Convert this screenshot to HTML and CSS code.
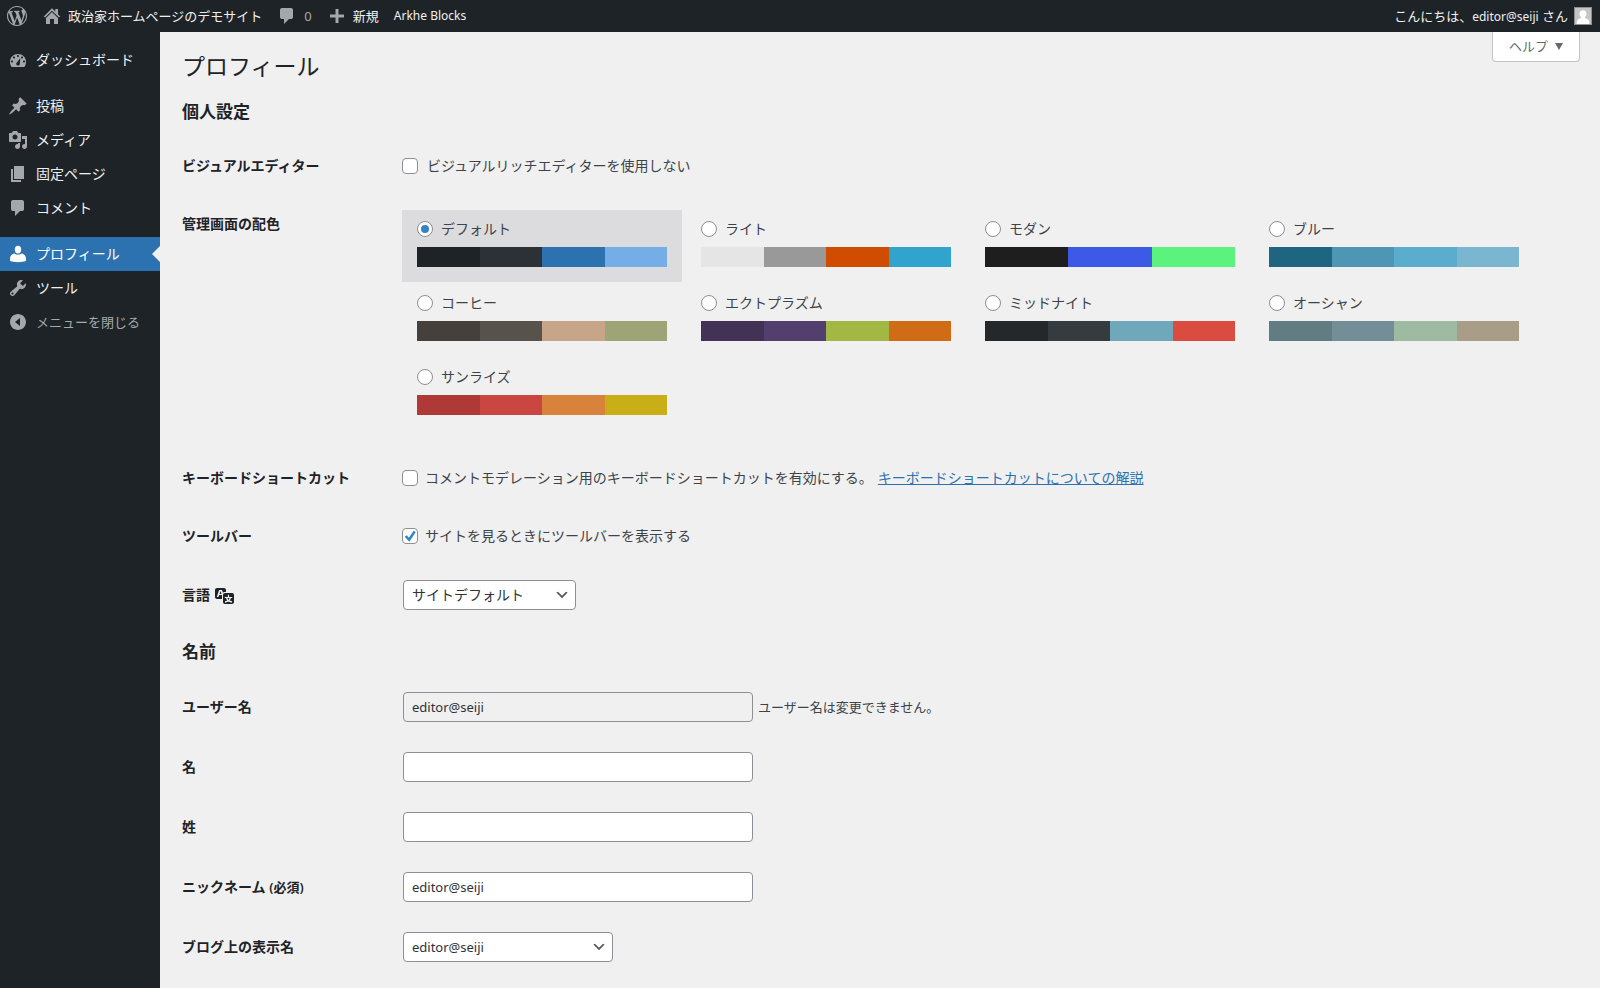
FILE: index.html
```html
<!DOCTYPE html>
<html lang="ja">
<head>
<meta charset="utf-8">
<title>プロフィール</title>
<link rel="stylesheet" href="styles.css">
</head>
<body>
<header class="adminbar">
  <nav class="adminbar-group" aria-label="ツールバー">
    <a class="bar-item bar-logo" href="#" aria-label="WordPress">
      <svg class="icon" viewBox="0 0 20 20"><path d="M20 10c0-5.51-4.49-10-10-10C4.48 0 0 4.49 0 10c0 5.52 4.48 10 10 10 5.51 0 10-4.48 10-10zM7.78 15.37L4.37 6.22c.55-.02 1.17-.08 1.17-.08.5-.06.44-1.13-.06-1.11 0 0-1.45.11-2.37.11-.18 0-.37 0-.58-.01C4.12 2.69 6.87 1.11 10 1.11c2.33 0 4.45.87 6.05 2.34-.68-.11-1.65.39-1.65 1.58 0 .74.45 1.36.9 2.1.35.61.55 1.36.55 2.46 0 1.49-1.4 5-1.4 5l-3.03-8.37c.54-.02.82-.17.82-.17.5-.05.44-1.25-.06-1.22 0 0-1.44.12-2.38.12-.87 0-2.33-.12-2.33-.12-.5-.03-.56 1.2-.06 1.22l.92.08 1.26 3.41zM17.41 10c.24-.64.74-1.87.43-4.25.7 1.29 1.05 2.71 1.05 4.25 0 3.29-1.73 6.24-4.4 7.78.97-2.59 1.94-5.2 2.92-7.78zM6.1 18.09C3.12 16.65 1.11 13.53 1.11 10c0-1.3.23-2.48.72-3.59C3.25 10.3 4.67 14.2 6.1 18.09zm4.03-6.63l2.58 6.98c-.86.29-1.76.45-2.71.45-.79 0-1.57-.11-2.29-.33.81-2.38 1.62-4.74 2.42-7.1z"/></svg>
    </a>
    <a class="bar-item" href="#">
      <svg class="icon" viewBox="0 0 20 20"><path d="M16 8.200l2.200 2.200-1.200 1.200L10 4.800l-7 6.800-1.200-1.200L10 2.200l3.300 3.300V3H16zm-6-2.100l6 5.900V18h-4v-5H8v5H4v-6z"/></svg>
      <span>政治家ホームページのデモサイト</span>
    </a>
    <a class="bar-item" href="#">
      <svg class="icon" viewBox="0 0 20 20"><path d="M5 2h9q.82 0 1.410.590T16 4v7q0 .820-.590 1.410T14 13h-2l-5 5v-5H5q-.820 0-1.410-.590T3 11V4q0-.820.590-1.410T5 2z"/></svg>
      <span class="bar-count">0</span>
    </a>
    <a class="bar-item" href="#">
      <svg class="icon" viewBox="0 0 20 20"><path d="M17 8.500v3h-5.500V17h-3v-5.500H3v-3h5.500V3h3v5.500z"/></svg>
      <span>新規</span>
    </a>
    <a class="bar-item bar-latin" href="#">Arkhe Blocks</a>
  </nav>
  <a class="bar-account" href="#">
    <span>こんにちは、<span class="bar-latin">editor@seiji</span> さん</span>
    <svg class="avatar" viewBox="0 0 18 18"><path fill="#8c8f94" d="M0 0h18v18H0z"/><path fill="#c5c5c7" d="M1 1h16v16H1z"/><path fill="#fff" d="M9 3.200c2.200 0 3.500 1.500 3.500 3.600 0 1.500-.6 2.700-1.500 3.400v.8c2.200.6 4 1.700 4.300 4V17H2.700v-2c.3-2.300 2.100-3.400 4.300-4v-.8C6.100 9.500 5.500 8.300 5.500 6.800c0-2.100 1.300-3.600 3.500-3.600z"/></svg>
  </a>
</header>

<div class="layout">
  <nav class="sidemenu" aria-label="メインメニュー">
    <a class="menu-item" href="#">
      <svg class="icon" viewBox="0 0 20 20"><path fill-rule="evenodd" d="M3.760 17h12.480c1.070-1.400 1.760-3.120 1.760-5 0-4.970-3.580-8-8-8s-8 3.030-8 8c0 1.880.690 3.600 1.760 5zM10 5c.550 0 1 .450 1 1s-.450 1-1 1-1-.450-1-1 .450-1 1-1zM6 6.500c.550 0 1 .450 1 1s-.450 1-1 1-1-.450-1-1 .450-1 1-1zm8 0c.550 0 1 .450 1 1s-.450 1-1 1-1-.450-1-1 .450-1 1-1zM12.300 8l-.5 6c-.1 1-.9 1.600-1.800 1.600-1 0-1.800-.8-1.800-1.800 0-.6.300-1.100.700-1.400zM4 10.500c.550 0 1 .450 1 1s-.450 1-1 1-1-.450-1-1 .450-1 1-1zm12 0c.550 0 1 .450 1 1s-.450 1-1 1-1-.450-1-1 .450-1 1-1z"/></svg>
      <span>ダッシュボード</span>
    </a>
    <a class="menu-item menu-item-start" href="#">
      <svg class="icon" viewBox="0 0 20 20"><path d="M10.440 3.020l1.820-1.820 6.360 6.350-1.830 1.820c-1.050-.680-2.480-.570-3.410.360l-.750.750c-.920.930-1.040 2.350-.350 3.410l-1.830 1.820-2.410-2.410-2.800 2.790c-.420.420-3.380 2.710-3.800 2.290s1.860-3.390 2.280-3.810l2.790-2.790L4.100 9.360l1.830-1.820c1.050.690 2.480.570 3.400-.360l.750-.750c.930-.920 1.050-2.350.360-3.410z"/></svg>
      <span>投稿</span>
    </a>
    <a class="menu-item" href="#">
      <svg class="icon" viewBox="0 0 20 20"><path fill-rule="evenodd" d="M13 11V4c0-.550-.450-1-1-1h-1.670L9 1H5L3.670 3H2c-.550 0-1 .450-1 1v7c0 .550.450 1 1 1h10c.550 0 1-.450 1-1zM7 4.500c1.380 0 2.500 1.120 2.500 2.500S8.380 9.500 7 9.500 4.500 8.380 4.500 7 5.620 4.500 7 4.500zM14 6h5v10.500c0 1.380-1.120 2.500-2.500 2.500S14 17.880 14 16.500s1.120-2.500 2.500-2.500c.170 0 .340.020.5.050V9h-3V6zm-4 8.050V13h2v3.500c0 1.380-1.120 2.500-2.500 2.500S7 17.880 7 16.500 8.120 14 9.500 14c.170 0 .340.020.5.050z"/></svg>
      <span>メディア</span>
    </a>
    <a class="menu-item" href="#">
      <svg class="icon" viewBox="0 0 20 20"><path d="M6 15V2h10v13H6zm-1 1h8v2H3V5h2v11z"/></svg>
      <span>固定ページ</span>
    </a>
    <a class="menu-item" href="#">
      <svg class="icon" viewBox="0 0 20 20"><path d="M5 2h9q.82 0 1.410.590T16 4v7q0 .820-.590 1.410T14 13h-2l-5 5v-5H5q-.820 0-1.410-.590T3 11V4q0-.820.590-1.410T5 2z"/></svg>
      <span>コメント</span>
    </a>
    <a class="menu-item menu-item-start menu-item-current" href="#" aria-current="page">
      <svg class="icon" viewBox="0 0 20 20"><path d="M10 1.800c2.100 0 3.200 1.500 3.200 3.600S12.200 9.600 10 9.600 6.800 7.500 6.800 5.400 7.900 1.800 10 1.800zM6.300 9.400c1.200.9 2.300 1.200 3.700 1.200s2.500-.3 3.700-1.200c2.500.5 4.300 2.600 4.300 5.200v2.200c-2 1-4.900 1.400-8 1.400s-6-.4-8-1.400v-2.200c0-2.600 1.800-4.700 4.300-5.200z"/></svg>
      <span>プロフィール</span>
    </a>
    <a class="menu-item" href="#">
      <svg class="icon" viewBox="0 0 20 20"><path fill-rule="evenodd" d="M16.680 9.770c-1.340 1.340-3.300 1.670-4.950.990l-5.410 6.520c-.990.990-2.590.990-3.580 0s-.990-2.590 0-3.570l6.520-5.420c-.680-1.650-.350-3.610.990-4.950 1.280-1.280 3.120-1.620 4.720-1.060l-2.890 2.890 2.820 2.820 2.860-2.870c.530 1.580.180 3.390-1.080 4.650zM3.810 16.210c.4.390 1.040.390 1.430 0 .4-.4.400-1.040 0-1.430-.390-.4-1.030-.4-1.430 0-.390.390-.390 1.030 0 1.430z"/></svg>
      <span>ツール</span>
    </a>
    <button class="menu-item menu-collapse" type="button">
      <svg class="icon" viewBox="0 0 20 20"><path fill-rule="evenodd" d="M10 2c4.420 0 8 3.580 8 8s-3.580 8-8 8-8-3.580-8-8 3.580-8 8-8zm2 12V6l-5 4z"/></svg>
      <span>メニューを閉じる</span>
    </button>
  </nav>

  <main class="content">
    <button class="help-tab" type="button">ヘルプ <span class="help-arrow"></span></button>
    <h1 class="page-title">プロフィール</h1>
    <form class="profile">
      <h2 class="section-title">個人設定</h2>
      <div class="row">
        <div class="row-head">ビジュアルエディター</div>
        <label class="choice choice-wide"><input class="check" type="checkbox">ビジュアルリッチエディターを使用しない</label>
      </div>
      <div class="row row-scheme">
        <div class="row-head" id="scheme">管理画面の配色</div>
        <div class="schemes" role="radiogroup" aria-labelledby="scheme">
          <label class="scheme scheme-selected"><span class="scheme-name"><input class="radio" type="radio" name="scheme" checked>デフォルト</span>
            <span class="palette"><i style="background:#1d2327"></i><i style="background:#2c3137"></i><i style="background:#2c72b0"></i><i style="background:#75aee6"></i></span></label>
          <label class="scheme"><span class="scheme-name"><input class="radio" type="radio" name="scheme">ライト</span>
            <span class="palette"><i style="background:#e5e5e5"></i><i style="background:#999"></i><i style="background:#cf4c00"></i><i style="background:#30a4cc"></i></span></label>
          <label class="scheme"><span class="scheme-name"><input class="radio" type="radio" name="scheme">モダン</span>
            <span class="palette"><i style="background:#1e1e1e"></i><i style="background:#3c5ae6"></i><i style="background:#5bf27d"></i></span></label>
          <label class="scheme"><span class="scheme-name"><input class="radio" type="radio" name="scheme">ブルー</span>
            <span class="palette"><i style="background:#1e6581"></i><i style="background:#4f96b4"></i><i style="background:#5aadcc"></i><i style="background:#7ab6cf"></i></span></label>
          <label class="scheme"><span class="scheme-name"><input class="radio" type="radio" name="scheme">コーヒー</span>
            <span class="palette"><i style="background:#46403c"></i><i style="background:#57534c"></i><i style="background:#c7a589"></i><i style="background:#9ea476"></i></span></label>
          <label class="scheme"><span class="scheme-name"><input class="radio" type="radio" name="scheme">エクトプラズム</span>
            <span class="palette"><i style="background:#413256"></i><i style="background:#523f6d"></i><i style="background:#a3b745"></i><i style="background:#d06c15"></i></span></label>
          <label class="scheme"><span class="scheme-name"><input class="radio" type="radio" name="scheme">ミッドナイト</span>
            <span class="palette"><i style="background:#25282b"></i><i style="background:#363b3f"></i><i style="background:#6fa8bb"></i><i style="background:#dc4b40"></i></span></label>
          <label class="scheme"><span class="scheme-name"><input class="radio" type="radio" name="scheme">オーシャン</span>
            <span class="palette"><i style="background:#627c83"></i><i style="background:#738e96"></i><i style="background:#9ebaa0"></i><i style="background:#aa9d88"></i></span></label>
          <label class="scheme"><span class="scheme-name"><input class="radio" type="radio" name="scheme">サンライズ</span>
            <span class="palette"><i style="background:#ae3936"></i><i style="background:#c94641"></i><i style="background:#d9823b"></i><i style="background:#caae17"></i></span></label>
        </div>
      </div>
      <div class="row">
        <div class="row-head">キーボードショートカット</div>
        <div class="row-field">
          <label class="choice"><input class="check" type="checkbox">コメントモデレーション用のキーボードショートカットを有効にする。</label>
          <a class="link" href="#">キーボードショートカットについての解説</a>
        </div>
      </div>
      <div class="row">
        <div class="row-head">ツールバー</div>
        <label class="choice"><input class="check" type="checkbox" checked>サイトを見るときにツールバーを表示する</label>
      </div>
      <div class="row row-input">
        <label class="row-head row-head-icon" for="locale">言語
          <svg class="translate" viewBox="0 0 20 20"><path fill-rule="evenodd" d="M11 7H9.490c-.630 0-1.250.300-1.590.700L7 5H4.130l-2.390 7h1.690l.740-2H7v4H2c-1.100 0-2-.9-2-2V5c0-1.100.9-2 2-2h7c1.100 0 2 .9 2 2v2zM6.510 9H4.490l1-2.930zM10 8h7c1.100 0 2 .9 2 2v7c0 1.100-.9 2-2 2h-7c-1.100 0-2-.9-2-2v-7c0-1.100.9-2 2-2zm7.250 5v-1.080h-3.170V9.750h-1.160v2.170H9.750V13h1.280c.110.850.560 1.850 1.280 2.620-.870.360-1.890.620-2.310.620-.010.020.220.970.200 1.460.840 0 2.210-.5 3.280-1.150 1.090.650 2.480 1.150 3.340 1.150-.020-.490.200-1.440.200-1.460-.430 0-1.490-.270-2.380-.630.700-.770 1.140-1.770 1.250-2.610h1.360zm-3.810 1.930c-.5-.460-.850-1.130-1.010-1.930h2.090c-.170.800-.510 1.470-1 1.930l-.040.030z"/></svg>
        </label>
        <select class="field field-locale" id="locale"><option>サイトデフォルト</option></select>
      </div>

      <h2 class="section-title section-title-name">名前</h2>
      <div class="row row-input">
        <label class="row-head" for="user">ユーザー名</label>
        <div class="row-field">
          <input class="field field-text" id="user" type="text" value="editor@seiji" readonly>
          <span class="note">ユーザー名は変更できません。</span>
        </div>
      </div>
      <div class="row row-input">
        <label class="row-head" for="first">名</label>
        <input class="field field-text" id="first" type="text">
      </div>
      <div class="row row-input">
        <label class="row-head" for="last">姓</label>
        <input class="field field-text" id="last" type="text">
      </div>
      <div class="row row-input">
        <label class="row-head" for="nick">ニックネーム <span class="required">(必須)</span></label>
        <input class="field field-text" id="nick" type="text" value="editor@seiji">
      </div>
      <div class="row row-input">
        <label class="row-head" for="display">ブログ上の表示名</label>
        <select class="field field-display" id="display"><option>editor@seiji</option></select>
      </div>
    </form>
  </main>
</div>
</body>
</html>
```
FILE: styles.css
```css
* { box-sizing: border-box; }

body {
  margin: 0;
  min-height: 100vh;
  display: flex;
  flex-direction: column;
  background: #f0f0f0;
  color: #3c434a;
  font: 14px/20px "Noto Sans", "Noto Sans CJK JP", sans-serif;
}

a { text-decoration: none; }
.icon { width: 20px; height: 20px; flex: none; fill: #a4a7ab; }

/* Top toolbar */
.adminbar {
  display: flex;
  justify-content: space-between;
  height: 32px;
  padding: 0 8px 0 7px;
  background: #1d2327;
  font-size: 13px;
}
.adminbar-group { display: flex; gap: 15px; }
.bar-item, .bar-account { display: flex; align-items: center; gap: 6px; color: #f0f0f1; }
.bar-count { margin-left: 1px; color: #a7aaad; }
.bar-latin { font-size: 12px; }
.avatar { width: 18px; height: 18px; }

/* Left menu */
.layout { display: flex; flex: 1; }
.sidemenu {
  flex: none;
  width: 160px;
  padding-top: 11px;
  background: #1d2327;
}
.menu-item {
  position: relative;
  display: flex;
  align-items: center;
  gap: 8px;
  width: 100%;
  height: 34px;
  padding: 0 8px;
  border: 0;
  background: none;
  color: #f0f0f1;
  font: inherit;
}
.menu-item-start { margin-top: 12px; }
.menu-item-current { background: #2c72b0; color: #fff; }
.menu-item-current .icon { fill: #fff; }
.menu-item-current::after {
  content: "";
  position: absolute;
  right: 0;
  top: 9px;
  border: 8px solid transparent;
  border-left: 0;
  border-right-color: #f0f0f0;
}
.menu-collapse { color: #a7aaad; font-size: 13px; }

/* Page */
.content { position: relative; flex: 1; padding: 18px 20px 0 22px; }
.help-tab {
  position: absolute;
  top: 0;
  right: 20px;
  display: flex;
  align-items: center;
  gap: 7px;
  height: 30px;
  padding: 0 16px 2px;
  border: 1px solid #c3c4c7;
  border-top: 0;
  border-radius: 0 0 4px 4px;
  background: #fff;
  color: #646970;
  font: inherit;
  font-size: 13px;
}
.help-arrow { margin-top: 2px; border: 4px solid transparent; border-top: 7px solid #646970; border-bottom: 0; }
.page-title { margin: 0; color: #1d2327; font-size: 23px; font-weight: 400; line-height: 32px; }
.section-title { margin: 18px 0 13px; color: #1d2327; font-size: 17px; line-height: 24px; }
.section-title-name { margin: 15px 0 13px; }

.row {
  display: grid;
  grid-template-columns: 220px 1fr;
  align-items: center;
  justify-items: start;
  min-height: 58px;
}
.row-input { min-height: 60px; }
.row-head { color: #1d2327; font-weight: 600; }
.row-head-icon { display: flex; align-items: center; gap: 5px; }
.required { font-size: 13px; }
.translate { width: 20px; height: 20px; fill: #1d2327; }
.row-field { display: flex; align-items: center; gap: 5px; }
.choice { display: flex; align-items: center; gap: 7px; }
.choice-wide { gap: 9px; }
.note { font-size: 13px; }
.link { color: #2c72b0; text-decoration: underline; }

.check, .radio {
  appearance: none;
  display: grid;
  place-items: center;
  width: 16px;
  height: 16px;
  margin: 0;
  border: 1px solid #8c8f94;
  border-radius: 4px;
  background: #fff;
}
.radio { border-radius: 50%; }
.radio:checked::before { content: ""; width: 8px; height: 8px; border-radius: 50%; background: #3582c4; }
.check:checked::before {
  content: "";
  width: 14px;
  height: 14px;
  background: #3582c4;
  clip-path: polygon(12% 55%, 27% 45%, 42% 63%, 76% 12%, 91% 21%, 46% 91%);
}

/* Colour schemes */
.row-scheme { align-items: start; padding-top: 15px; }
.row-scheme .row-head { padding-top: 4px; }
.schemes {
  display: grid;
  grid-template-columns: repeat(4, 1fr);
  column-gap: 4px;
  row-gap: 2px;
  width: 100%;
  padding-right: 46px;
  margin-bottom: 19px;
}
.scheme { display: flex; flex-direction: column; gap: 8px; padding: 9px 15px 15px; }
.scheme-selected { background: #dcdcde; }
.scheme-name { display: flex; align-items: center; gap: 8px; }
.palette { display: flex; height: 20px; }
.palette i { flex: 1; }

.field {
  height: 30px;
  margin: 0 0 0 1px;
  padding: 0 8px;
  border: 1px solid #8c8f94;
  border-radius: 4px;
  background-color: #fff;
  color: #2c3338;
  font: inherit;
}
.field-text { width: 350px; }
.field-text, .field-display { font-size: 13px; }
.field[readonly] { background: #f0f0f0; }
select.field {
  appearance: none;
  background-image: url('data:image/svg+xml;utf8,<svg xmlns="http://www.w3.org/2000/svg" viewBox="0 0 20 20"><path d="M5 6l5 5 5-5 2 1-7 7-7-7z" fill="%23555"/></svg>');
  background-repeat: no-repeat;
  background-position: right 5px center;
  background-size: 16px;
}
.field-locale { width: 173px; }
.field-display { width: 210px; }
```
